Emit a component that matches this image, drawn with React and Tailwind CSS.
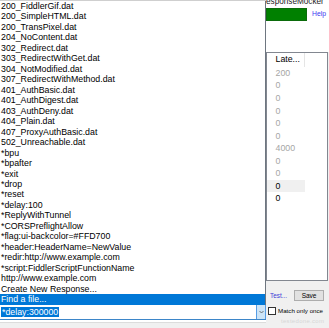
import React from "react";

const items = [
  "200_FiddlerGif.dat",
  "200_SimpleHTML.dat",
  "200_TransPixel.dat",
  "204_NoContent.dat",
  "302_Redirect.dat",
  "303_RedirectWithGet.dat",
  "304_NotModified.dat",
  "307_RedirectWithMethod.dat",
  "401_AuthBasic.dat",
  "401_AuthDigest.dat",
  "403_AuthDeny.dat",
  "404_Plain.dat",
  "407_ProxyAuthBasic.dat",
  "502_Unreachable.dat",
  "*bpu",
  "*bpafter",
  "*exit",
  "*drop",
  "*reset",
  "*delay:100",
  "*ReplyWithTunnel",
  "*CORSPreflightAllow",
  "*flag:ui-backcolor=#FFD700",
  "*header:HeaderName=NewValue",
  "*redir:http://www.example.com",
  "*script:FiddlerScriptFunctionName",
  "http://www.example.com",
  "Create New Response...",
];

// latency column values: [text, dark?, highlighted?]
const latency = [
  ["200", false, false],
  ["0", false, false],
  ["0", false, false],
  ["0", false, false],
  ["0", false, false],
  ["0", false, false],
  ["4000", false, false],
  ["0", false, false],
  ["0", false, false],
  ["0", true, true],
  ["0", true, false],
];

const ListRow = ({ label, selected }) => (
  <div
    className={`h-[10.48px] leading-[10.48px] pl-[1px] whitespace-nowrap ${
      selected ? "bg-[#0078d7] text-white" : "text-black"
    }`}
  >
    {label}
  </div>
);

export default function App() {
  return (
    <div className="w-[329px] h-[328px] overflow-hidden flex bg-[#f0f0f0] font-['Liberation_Sans',Arial,sans-serif] text-[8.8px]">
      {/* --- Dropdown + combo --- */}
      <div className="w-[266px] flex flex-col">
        <div className="h-[1px] bg-[#cfcfcf]" />
        <div className="h-[304px] bg-white border-r border-[#6e7680]">
          {items.map((label) => (
            <ListRow key={label} label={label} />
          ))}
          <ListRow label="Find a file..." selected />
        </div>

        {/* Combo box */}
        <div className="h-[15px] flex bg-white border-b border-[#3d86c9]">
          <div className="flex-1 flex items-center pl-[1px]">
            <span className="bg-[#0078d7] text-white px-[1px] leading-[10px]">
              *delay:300000
            </span>
          </div>
          <div className="w-[10px] flex items-center justify-center bg-[#cce4f7] border-l border-r border-[#569de5]">
            <svg width="5" height="4" viewBox="0 0 5 4">
              <path d="M0.5 1 L2.5 3 L4.5 1" fill="none" stroke="#555" strokeWidth="0.8" />
            </svg>
          </div>
        </div>
        <div className="h-[2px] bg-white" />
        <div className="h-[1px] bg-[#dcdcdc]" />
      </div>

      {/* --- Right panel --- */}
      <div className="w-[63px] flex flex-col">
        <div className="h-[52px] bg-white flex flex-col">
          <div className="h-[8px] overflow-hidden">
            <div className="mt-[-3px] leading-[9px] text-[8.2px] text-[#222] whitespace-nowrap">
              esponseMocker
            </div>
          </div>
          <div className="h-[13px] flex items-center">
            <div className="w-[41px] h-[13px] bg-[#008000] border border-[#0b6b0b]" />
            <span className="ml-[5px] text-[6.8px] text-[#3b3bf0]">Help</span>
          </div>
        </div>

        {/* List view */}
        <div className="w-[62px] h-[229px] bg-white border border-[#828790] flex flex-col">
          <div className="h-[13.9px] flex">
            <div className="w-[38px] border-r border-[#e5e5e5] pl-[8.5px] leading-[13.9px] text-black">
              Late...
            </div>
          </div>
          {latency.map(([v, dark, hl], i) => (
            <div
              key={i}
              className={`w-[38px] h-[12.55px] leading-[12.55px] pl-[8.5px] ${
                hl ? "bg-[#f0f0f0]" : ""
              } ${dark ? "text-black" : "text-[#a6a6a6]"}`}
            >
              {v}
            </div>
          ))}
        </div>

        {/* Bottom controls */}
        <div className="flex-1 flex flex-col pt-[9px]">
          <div className="flex items-center h-[11px]">
            <span className="ml-[4px] text-[6.4px] text-[#3b3bd6]">Test...</span>
            <button className="ml-[7px] w-[30px] h-[11px] bg-[#e1e1e1] border border-[#adadad] text-[6.5px] leading-[9px] text-black">
              Save
            </button>
          </div>
          <div className="flex items-center h-[9px] mt-[5px]">
            <div className="ml-[2px] w-[8px] h-[8px] bg-white border border-[#333]" />
            <span className="ml-[2px] text-[6.2px] text-black whitespace-nowrap">
              Match only once
            </span>
          </div>
          <div className="mt-[2px] ml-[15px] text-[6px] text-[#d6d6d6] tracking-[0.3px] whitespace-nowrap">
            testedone.com
          </div>
        </div>
      </div>
    </div>
  );
}
